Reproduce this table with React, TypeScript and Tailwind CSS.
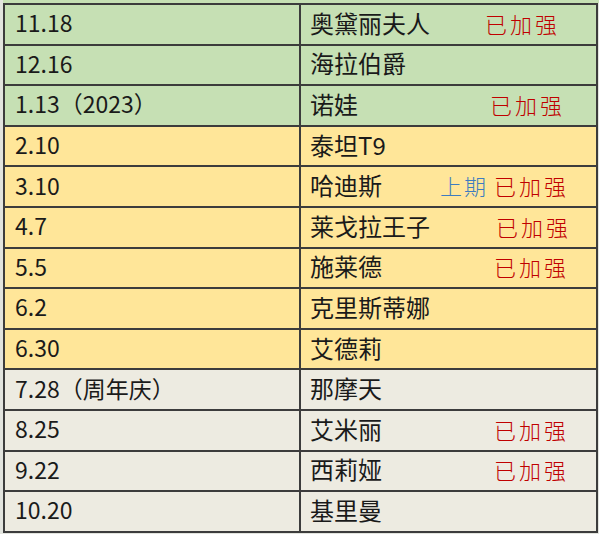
import React from "react"

type Row = {
  date: string
  name: string
  tag?: string
  note?: boolean
  pr?: string
  bg: string
}

const GREEN = "bg-[#c6e0b4]"
const YELLOW = "bg-[#ffe699]"
const GREY = "bg-[#edebe1]"

const rows: Row[] = [
  { date: "11.18", name: "奥黛丽夫人", note: true, pr: "pr-[36px]", bg: GREEN },
  { date: "12.16", name: "海拉伯爵", bg: GREEN },
  { date: "1.13（2023）", name: "诺娃", note: true, pr: "pr-[31px]", bg: GREEN },
  { date: "2.10", name: "泰坦T9", bg: YELLOW },
  { date: "3.10", name: "哈迪斯", tag: "上期", note: true, pr: "pr-[27px]", bg: YELLOW },
  { date: "4.7", name: "莱戈拉王子", note: true, pr: "pr-[25px]", bg: YELLOW },
  { date: "5.5", name: "施莱德", note: true, pr: "pr-[27px]", bg: YELLOW },
  { date: "6.2", name: "克里斯蒂娜", bg: YELLOW },
  { date: "6.30", name: "艾德莉", bg: YELLOW },
  { date: "7.28（周年庆）", name: "那摩天", bg: GREY },
  { date: "8.25", name: "艾米丽", note: true, pr: "pr-[27px]", bg: GREY },
  { date: "9.22", name: "西莉娅", note: true, pr: "pr-[27px]", bg: GREY },
  { date: "10.20", name: "基里曼", bg: GREY },
]

export default function App() {
  return (
    <div
      className="w-[599px] h-[534px] overflow-hidden bg-[#e2e4de] text-[#1a1a1a]"
      style={{ fontFamily: '"Noto Sans CJK SC", "Noto Sans", sans-serif' }}
    >
      <div className="ml-[3px] w-[596px] h-[3px] bg-[#c6e0b4]" />
      <div className="ml-[3px] w-[595px] border-l-2 border-r-2 border-t-2 border-[#3c3c3c]">
        {rows.map((r, i) => (
          <div
            key={i}
            className={`grid grid-cols-[296px_295px] h-[40.6px] border-b-2 border-[#3c3c3c] ${r.bg}`}
          >
            <div className="flex items-center pl-[10px] pb-[3px] border-r-2 border-[#3c3c3c] text-[23px] leading-none">
              {r.date}
            </div>
            <div className={`flex items-center pl-[9px] pb-[3px] text-[24px] leading-none ${r.pr ?? ""}`}>
              <span>{r.name}</span>
              {r.note && (
                <span className="ml-auto flex items-center text-[22px] font-light">
                  {r.tag && (
                    <span className="text-[#3d7cc0] tracking-[2px] mr-[6px]">{r.tag}</span>
                  )}
                  <span className="text-[#c00000] tracking-[3px]">已加强</span>
                </span>
              )}
            </div>
          </div>
        ))}
      </div>
    </div>
  )
}
